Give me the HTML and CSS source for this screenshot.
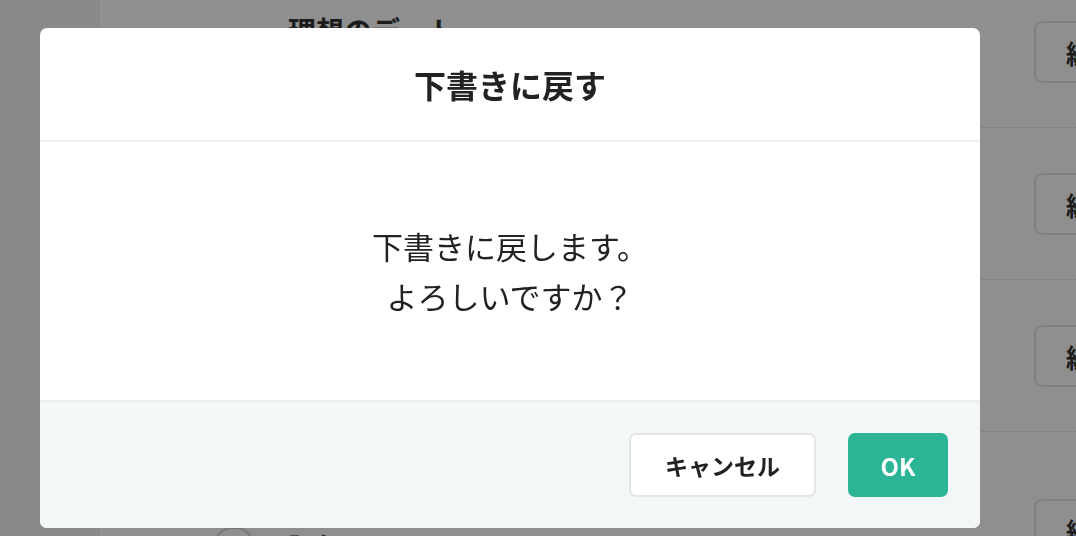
FILE: index.html
```html
<!DOCTYPE html>
<html lang="ja">
<head>
<meta charset="utf-8">
<title>下書きに戻す</title>
<link rel="stylesheet" href="styles.css">
</head>
<body>
<div class="app">
  <aside class="sidebar"></aside>
  <main class="main">
    <ul class="list">
      <li class="row row-first">
        <span class="check"></span>
        <span class="title">理想のデート</span>
        <button class="edit">編集</button>
      </li>
      <li class="row">
        <span class="check"></span>
        <span class="title">休日の過ごし方</span>
        <button class="edit">編集</button>
      </li>
      <li class="row">
        <span class="check"></span>
        <span class="title">好きな食べ物</span>
        <button class="edit">編集</button>
      </li>
      <li class="row row-last">
        <span class="check"></span>
        <span class="title">評価について</span>
        <button class="edit">編集</button>
      </li>
    </ul>
  </main>
</div>

<div class="overlay">
  <div class="modal" role="dialog" aria-labelledby="modal-title">
    <header class="modal-header">
      <h2 id="modal-title" class="modal-title">下書きに戻す</h2>
    </header>
    <div class="modal-body">
      <p class="modal-text">下書きに戻します。<br>よろしいですか？</p>
    </div>
    <footer class="modal-footer">
      <button class="btn btn-cancel">キャンセル</button>
      <button class="btn btn-ok">OK</button>
    </footer>
  </div>
</div>
</body>
</html>
```

FILE: styles.css
```css
html, body {
  margin: 0;
  padding: 0;
  height: 100%;
  overflow: hidden;
}

body {
  font-family: "Noto Sans CJK JP", "Noto Sans", "Liberation Sans", sans-serif;
  color: #333;
  background: #fff;
}

.app {
  display: flex;
  width: 1160px;
  height: 100vh;
}

.sidebar {
  width: 98px;
  flex: none;
  background: #f5f6f5;
  border-right: 1px solid #ececec;
}

.main {
  flex: 1;
  background: #fff;
  overflow: hidden;
}

.list {
  list-style: none;
  margin: 0;
  padding: 0;
}

.row {
  display: flex;
  align-items: flex-start;
  height: 151px;
  padding: 0 0 0 115px;
  border-bottom: 1px dotted #dcdcdc;
  box-sizing: content-box;
}

.row-first {
  height: 127px;
}

.check {
  width: 36px;
  height: 36px;
  border: 2px solid #d7d7d7;
  border-radius: 18px;
  flex: none;
  margin-top: 45px;
}

.title {
  flex: 1;
  margin-left: 34px;
  font-size: 28px;
  font-weight: 700;
  line-height: 40px;
  margin-top: 43px;
  color: #333;
}

.row-first .title {
  margin-top: 10px;
}

.row-first .check {
  margin-top: 40px;
}

.row-last .check,
.row-last .title {
  margin-top: 95px;
}

.edit {
  width: 110px;
  height: 62px;
  margin-top: 45px;
  margin-right: 16px;
  background: #fff;
  border: 2px solid #e4e4e4;
  border-radius: 8px;
  font-family: inherit;
  font-size: 26px;
  font-weight: 700;
  color: #333;
  text-align: left;
  padding: 0 0 0 30px;
}

.row-first .edit {
  margin-top: 21px;
}

.row-last .edit {
  margin-top: 67px;
}

/* overlay + modal */
.overlay {
  position: fixed;
  inset: 0;
  background: rgba(0, 0, 0, 0.44);
  display: flex;
  align-items: flex-start;
  justify-content: flex-start;
  padding: 28px 0 0 40px;
}

.modal {
  width: 940px;
  height: 500px;
  background: #fff;
  border-radius: 7px;
  overflow: hidden;
  display: flex;
  flex-direction: column;
}

.modal-header {
  height: 112px;
  display: flex;
  align-items: center;
  justify-content: center;
  border-bottom: 2px solid #eff1f1;
  flex: none;
}

.modal-title {
  margin: 0;
  font-size: 32px;
  font-weight: 700;
  color: #222;
  letter-spacing: 0;
}

.modal-body {
  flex: 1;
  display: flex;
  align-items: center;
  justify-content: center;
}

.modal-text {
  margin: 0;
  text-align: center;
  font-size: 31px;
  line-height: 50px;
  color: #222;
  font-weight: 400;
}

.modal-footer {
  height: 128px;
  flex: none;
  background: #f4f7f8;
  border-top: 2px solid #eceff0;
  display: flex;
  align-items: center;
  justify-content: flex-end;
  gap: 32px;
  padding: 0 32px;
  box-sizing: border-box;
}

.btn {
  height: 64px;
  border-radius: 7px;
  font-family: inherit;
  font-size: 24px;
  font-weight: 700;
  cursor: pointer;
}

.btn-cancel {
  width: 187px;
  background: #fff;
  border: 2px solid #e3e6e7;
  color: #222;
  font-size: 23px;
}

.btn-ok {
  width: 100px;
  background: #2bb596;
  border: none;
  color: #fff;
}
```
